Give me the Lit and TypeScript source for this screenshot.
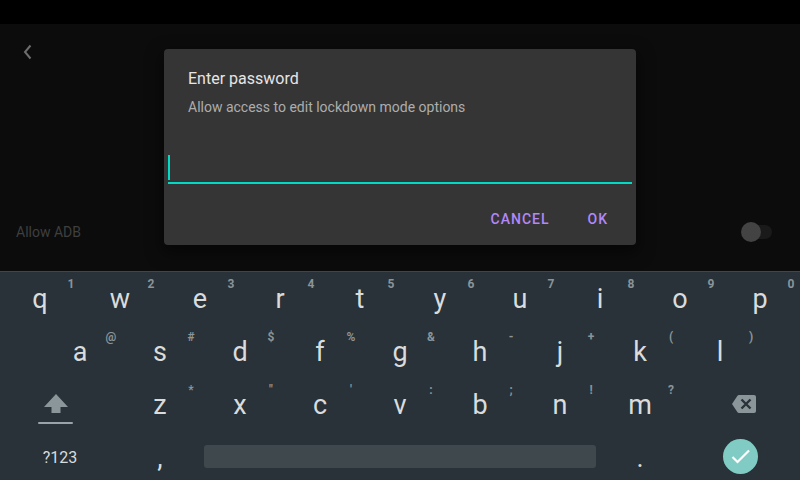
import { LitElement, html, css } from "lit";
import { customElement, state } from "lit/decorators.js";

type Key = [letter: string, hint: string];

const pair = (letters: string, hints: string): Key[] =>
  [...letters].map((l, i) => [l, hints[i]] as Key);

const TOP = pair("qwertyuiop", "1234567890");
const HOME = pair("asdfghjkl", "@#$%&-+()");
const BOTTOM = pair("zxcvbnm", "*\"':;!?");

@customElement("soft-keyboard")
export class SoftKeyboard extends LitElement {
  static styles = css`
    :host {
      display: block;
      background: #283238;
      border-top: 1px solid #3c484b;
      color: #d9dbdc;
    }
    .row {
      display: grid;
      grid-template-columns: repeat(20, 1fr);
      height: 53px;
    }
    .row.last {
      box-sizing: border-box;
      height: 49px;
      padding-top: 2px;
    }
    button {
      position: relative;
      grid-column: span 2;
      display: flex;
      align-items: center;
      justify-content: center;
      min-width: 0;
      margin: 0;
      padding: 0;
      border: 0;
      background: none;
      color: inherit;
      font: 27px Roboto, sans-serif;
    }
    .home button:first-child {
      grid-column: 2 / span 2;
    }
    .hint {
      position: absolute;
      top: 5px;
      right: 3px;
      min-width: 12px;
      text-align: center;
      font-size: 12px;
      font-weight: 700;
      line-height: 14px;
      color: #8b9498;
    }
    .row .wide {
      grid-column: span 3;
    }
    .row .shift {
      justify-content: flex-start;
      padding-left: 38px;
    }
    .row .delete {
      padding-left: 8px;
    }
    .row .punct {
      padding-top: 2px;
    }
    .row .space {
      grid-column: span 10;
      padding: 0 4px;
    }
    .bar {
      flex: 1;
      height: 23px;
      border-radius: 3px;
      background: #3e484d;
    }
    .row .mode {
      padding-top: 2px;
      font-size: 16px;
    }
    .enter {
      width: 35px;
      height: 35px;
      border-radius: 50%;
      background: #80cbc4;
    }
    svg {
      display: block;
      flex: none;
    }
  `;

  private key([letter, hint]: Key) {
    return html`<button type="button">${letter}<span class="hint">${hint}</span></button>`;
  }

  render() {
    return html`
      <div class="row">${TOP.map((k) => this.key(k))}</div>
      <div class="row home">${HOME.map((k) => this.key(k))}</div>
      <div class="row">
        <button class="wide shift" type="button" aria-label="Shift">
          <svg width="36" height="40" viewBox="0 0 36 40" fill="#8b969b">
            <path d="M18 9 30 22H22.500V28H13.500V22H6Z" />
            <rect x="0" y="37" width="35" height="2" rx="1" fill="#9aa3a7" />
          </svg>
        </button>
        ${BOTTOM.map((k) => this.key(k))}
        <button class="wide delete" type="button" aria-label="Delete">
          <svg width="24" height="20" viewBox="0 0 24 20">
            <path d="M7 0H22Q24 0 24 2V16Q24 18 22 18H7Q6 18 5.300 17L0 9 5.300 1Q6 0 7 0Z" fill="#8b969b" />
            <path d="M9.500 4.500 18.500 13.500M18.500 4.500 9.500 13.500" stroke="#283238" stroke-width="2.400" />
          </svg>
        </button>
      </div>
      <div class="row last">
        <button class="wide mode" type="button">?123</button>
        <button class="punct" type="button">,</button>
        <button class="space" type="button" aria-label="Space"><span class="bar"></span></button>
        <button class="punct" type="button">.</button>
        <button class="wide" type="button" aria-label="Done">
          <svg class="enter" viewBox="0 0 35 35" fill="none" stroke="#fff" stroke-width="2.200">
            <path d="M9.500 18 14.500 23 26 11.500" />
          </svg>
        </button>
      </div>
    `;
  }
}

@customElement("password-dialog")
export class PasswordDialog extends LitElement {
  static styles = css`
    :host {
      display: block;
      width: 59%;
      border-radius: 4px;
      background: #353535;
      box-shadow: 0 6px 16px 2px rgba(0, 0, 0, 0.5);
      font-family: Roboto, sans-serif;
    }
    form {
      display: flex;
      flex-direction: column;
    }
    h1 {
      margin: 0;
      padding: 18px 24px 0;
      font-size: 16px;
      font-weight: 400;
      line-height: 24px;
      color: #e6e6e6;
    }
    label {
      padding: 6px 24px 0;
      font-size: 14px;
      line-height: 20px;
      color: #adadad;
    }
    input {
      margin: 36px 4px 0;
      height: 31px;
      box-sizing: border-box;
      padding: 0 0 4px;
      border: 0;
      border-bottom: 2px solid #03dac5;
      border-radius: 0;
      outline: 0;
      background: linear-gradient(#03dac5, #03dac5) 0 2px / 2px 25px no-repeat;
      color: #fff;
      font: 18px Roboto, sans-serif;
    }
    .actions {
      display: flex;
      justify-content: flex-end;
      gap: 22px;
      padding: 17px 20px 8px;
    }
    button {
      height: 36px;
      padding: 0 8px;
      border: 0;
      background: none;
      color: #b388f8;
      font: 500 14px Roboto, sans-serif;
      letter-spacing: 1px;
    }
  `;

  render() {
    return html`
      <form role="dialog" aria-labelledby="title">
        <h1 id="title">Enter password</h1>
        <label for="password">Allow access to edit lockdown mode options</label>
        <input id="password" type="password" />
        <div class="actions">
          <button type="button">CANCEL</button>
          <button type="button">OK</button>
        </div>
      </form>
    `;
  }
}

@customElement("app-root")
export class AppRoot extends LitElement {
  @state() private adb = false;

  static styles = css`
    :host {
      display: flex;
      flex-direction: column;
      min-height: 100vh;
      background: #0c0c0c;
      font-family: Roboto, sans-serif;
    }
    .status {
      height: 24px;
      background: #000;
    }
    main {
      position: relative;
      flex: 1;
      display: flex;
      flex-direction: column;
      justify-content: space-between;
    }
    .back {
      align-self: flex-start;
      display: flex;
      padding: 20px 23px;
      border: 0;
      background: none;
    }
    .setting {
      display: flex;
      align-items: center;
      justify-content: space-between;
      padding: 0 28px 27px 16px;
      font-size: 14px;
      line-height: 24px;
      color: #3f3f3f;
    }
    .switch {
      appearance: none;
      display: flex;
      align-items: center;
      width: 28px;
      height: 14px;
      margin: 0;
      border-radius: 7px;
      background: #1a1a1a;
    }
    .switch::before {
      content: "";
      width: 20px;
      height: 20px;
      flex: none;
      margin-left: -3px;
      border-radius: 50%;
      background: #434343;
    }
    .overlay {
      position: absolute;
      inset: 0 0 2px;
      display: flex;
      align-items: center;
      justify-content: center;
    }
  `;

  render() {
    return html`
      <div class="status"></div>
      <main>
        <button class="back" type="button" aria-label="Back">
          <svg width="9" height="16" viewBox="0 0 9 16" fill="none" stroke="#6e6e6e" stroke-width="2">
            <path d="M7.500 1.500 2 8 7.500 14.500" />
          </svg>
        </button>
        <div class="setting">
          <label for="adb">Allow ADB</label>
          <input
            id="adb"
            class="switch"
            type="checkbox"
            role="switch"
            .checked=${this.adb}
            @change=${(e: Event) => (this.adb = (e.target as HTMLInputElement).checked)}
          />
        </div>
        <div class="overlay"><password-dialog></password-dialog></div>
      </main>
      <soft-keyboard></soft-keyboard>
    `;
  }
}
